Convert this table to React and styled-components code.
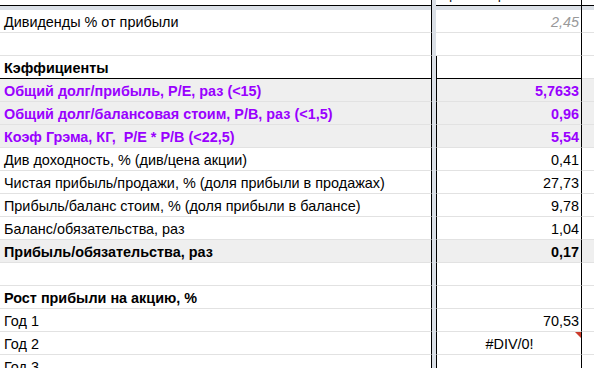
import React from "react";
import styled, { createGlobalStyle, css } from "styled-components";

const Global = createGlobalStyle`
  html, body { margin: 0; padding: 0; background: #fff; }
  body { width: 594px; height: 368px; overflow: hidden; }
`;

const GRID = "#e2e2e2";
const BAR = "#dadfe6";
const SHADE = "#efefef";
const PURPLE = "#9900ff";

const Sheet = styled.div`
  width: 594px;
  height: 368px;
  overflow: hidden;
  display: flex;
  flex-direction: column;
  font-family: "Liberation Sans", Arial, sans-serif;
  font-size: 14.4px;
  line-height: 17px;
  color: #000;
`;

const Row = styled.div`
  display: grid;
  grid-template-columns: 432px 4px 146px 12px;
  height: ${(p) => p.$h || 23}px;
  flex: none;
`;

const Cell = styled.div`
  position: relative;
  box-sizing: border-box;
  display: flex;
  align-items: flex-end;
  overflow: hidden;
  white-space: pre;
  padding: 0 3px 1px 4px;
  background: ${(p) => (p.$shade ? SHADE : "#fff")};
  border-bottom: 1px solid ${(p) => (p.$strong ? "#000" : GRID)};
  font-weight: ${(p) => (p.$bold ? 700 : 400)};
  color: ${(p) => (p.$purple ? PURPLE : "#000")};
`;

const NameCell = styled(Cell)`
  border-right: 1px solid #000;
`;

const ValueCell = styled(Cell)`
  border-right: 1px solid #000;
  border-left: ${(p) => (p.$boxed ? "1px solid #000" : "none")};
  justify-content: ${(p) => (p.$center ? "center" : "flex-end")};
  padding-right: ${(p) => (p.$center ? 3 : 2)}px;
  ${(p) =>
    p.$muted &&
    css`
      color: #999;
      font-style: italic;
    `}
`;

const SpareCell = styled(Cell)``;

const FrozenBar = styled.div`
  background: ${BAR};
`;

const HeaderName = styled.div`
  box-sizing: border-box;
  border-right: 1px solid #000;
  border-bottom: 1px solid #000;
  background: #fff;
`;

const HeaderValue = styled.div`
  box-sizing: border-box;
  border-right: 1px solid #000;
  border-bottom: 1px solid #000;
  background: #fff;
  overflow: hidden;
  display: flex;
  align-items: flex-end;
  padding: 0 0 2px 13px;
  white-space: pre;
  color: #222;
`;

const HeaderSpare = styled.div`
  border-bottom: 1px solid #000;
`;

const BarName = styled.div`
  box-sizing: border-box;
  border-right: 1px solid #000;
  background: ${BAR};
`;

const BarValue = styled.div`
  box-sizing: border-box;
  border-right: 1px solid #000;
  background: ${BAR};
`;

const ErrorFlag = styled.span`
  position: absolute;
  top: 0;
  right: 0;
  width: 0;
  height: 0;
  border-top: 6px solid #cc3b2b;
  border-left: 6px solid transparent;
`;

const rows = [
  { name: "Дивиденды % от прибыли", value: "2,45", muted: true },
  { name: "", value: "" },
  { name: "Кэффициенты", bold: true, strong: true, boxed: true },
  { name: "Общий долг/прибыль, P/E, раз (<15)", value: "5,7633", purple: true, bold: true, shade: true, boxed: true },
  { name: "Общий долг/балансовая стоим, P/B, раз (<1,5)", value: "0,96", purple: true, bold: true, shade: true, boxed: true },
  { name: "Коэф Грэма, КГ,  P/E * P/B (<22,5)", value: "5,54", purple: true, bold: true, shade: true, boxed: true },
  { name: "Див доходность, % (див/цена акции)", value: "0,41", boxed: true },
  { name: "Чистая прибыль/продажи, % (доля прибыли в продажах)", value: "27,73", boxed: true },
  { name: "Прибыль/баланс стоим, % (доля прибыли в балансе)", value: "9,78", boxed: true },
  { name: "Баланс/обязательства, раз", value: "1,04", boxed: true },
  { name: "Прибыль/обязательства, раз", value: "0,17", bold: true, shade: true, boxed: true },
  { name: "", value: "", boxed: true },
  { name: "Рост прибыли на акцию, %", bold: true, boxed: true },
  { name: "Год 1", value: "70,53", boxed: true },
  { name: "Год 2", value: "#DIV/0!", center: true, error: true, boxed: true },
  { name: "Год 3", value: "", boxed: true },
];

export default function App() {
  return (
    <>
      <Global />
      <Sheet>
        <Row $h={6}>
          <HeaderName />
          <FrozenBar />
          <HeaderValue>расчет р</HeaderValue>
          <HeaderSpare />
        </Row>
        <Row $h={4}>
          <BarName />
          <FrozenBar />
          <BarValue />
          <FrozenBar />
        </Row>
        {rows.map((r, i) => (
          <Row key={i}>
            <NameCell $bold={r.bold} $purple={r.purple} $shade={r.shade} $strong={r.strong}>
              {r.name}
            </NameCell>
            <FrozenBar />
            <ValueCell
              $bold={r.bold}
              $purple={r.purple}
              $shade={r.shade}
              $strong={r.strong}
              $muted={r.muted}
              $center={r.center}
              $boxed={r.boxed}
            >
              {r.value}
              {r.error && <ErrorFlag />}
            </ValueCell>
            <SpareCell $shade={r.shade} />
          </Row>
        ))}
      </Sheet>
    </>
  );
}
